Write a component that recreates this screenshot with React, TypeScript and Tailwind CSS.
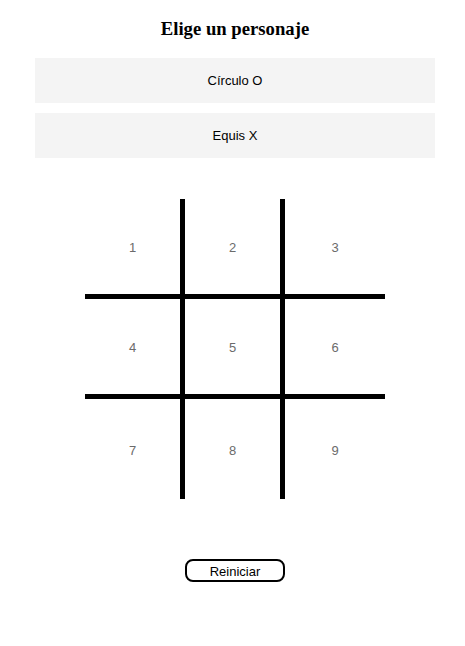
const cells = [1, 2, 3, 4, 5, 6, 7, 8, 9];

export default function App() {
  return (
    <div className="ml-[35px] w-[400px] pt-[18px] font-['Liberation_Sans',Arial,sans-serif]">
      <h1 className="text-center text-[18.7px] leading-[22px] font-bold text-black font-['Liberation_Serif','Times_New_Roman',serif]">
        Elige un personaje
      </h1>

      <div className="mt-[18px] flex flex-col gap-[10px]">
        <button className="h-[45px] w-full bg-[#f4f4f4] text-[13px] text-black">Círculo O</button>
        <button className="h-[45px] w-full bg-[#f4f4f4] text-[13px] text-black">Equis X</button>
      </div>

      <div className="mx-auto mt-[41px] grid w-[300px] grid-cols-3">
        {cells.map((n) => (
          <div
            key={n}
            className={`flex h-[100px] w-[100px] items-center justify-center border-black pt-[3px] text-[13px] text-[#6b6b6b] ${
              n % 3 !== 0 ? "border-r-[5px]" : ""
            } ${n <= 6 ? "border-b-[5px]" : ""}`}
          >
            {n}
          </div>
        ))}
      </div>

      <div className="mt-[60px] flex justify-center">
        <button className="h-[23px] w-[100px] rounded-[8px] border-2 border-black bg-white pt-[2px] text-[13px] leading-none text-black">
          Reiniciar
        </button>
      </div>
    </div>
  );
}
